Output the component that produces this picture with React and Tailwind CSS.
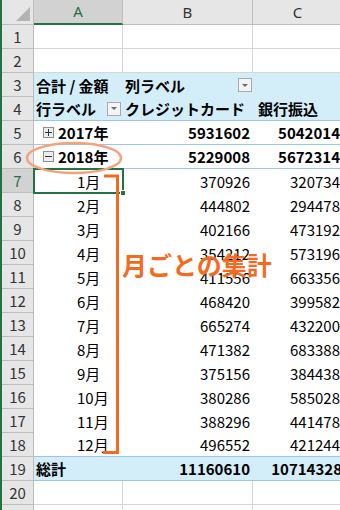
const months = [
  ["1月", 370926, 320734],
  ["2月", 444802, 294478],
  ["3月", 402166, 473192],
  ["4月", 354212, 573196],
  ["5月", 411556, 663356],
  ["6月", 468420, 399582],
  ["7月", 665274, 432200],
  ["8月", 471382, 683388],
  ["9月", 375156, 384438],
  ["10月", 380286, 585028],
  ["11月", 388296, 441478],
  ["12月", 496552, 421244],
];

function RowHead({ n, active }) {
  return (
    <div
      className={`flex w-[32px] shrink-0 items-center justify-center border-r border-b border-[#bdbdbd] text-[15px] ${
        active ? "bg-[#d2d2d2] text-[#217346]" : "bg-[#e6e6e6] text-[#333]"
      }`}
    >
      {n}
    </div>
  );
}

function DropButton() {
  return (
    <span className="flex h-[14px] w-[14px] shrink-0 items-center justify-center border border-[#a9a9a9] bg-[#f4f4f4]">
      <span className="h-0 w-0 border-x-[3px] border-t-[3px] border-x-transparent border-t-[#6b6b6b]" />
    </span>
  );
}

function ToggleBox({ open }) {
  return (
    <span className="relative mr-[4px] flex h-[11px] w-[11px] shrink-0 items-center justify-center border border-[#8e8e8e] bg-[#eeeeee]">
      <span className="h-px w-[7px] bg-[#333]" />
      {!open ? <span className="absolute h-[7px] w-px bg-[#333]" /> : null}
    </span>
  );
}

function GridRow({ n }) {
  return (
    <div className="flex h-[24px]">
      <RowHead n={n} />
      <div className="w-[89px] shrink-0 border-r border-b border-[#d6d6d6]" />
      <div className="w-[130px] shrink-0 border-r border-b border-[#d6d6d6]" />
      <div className="w-[90px] shrink-0 border-r border-b border-[#d6d6d6]" />
    </div>
  );
}

export default function App() {
  return (
    <div className="relative h-[510px] w-[340px] overflow-hidden border-l-2 border-[#217346] bg-white font-['Noto_Sans_CJK_JP',sans-serif] text-[15px] leading-none text-black">
      {/* column headers */}
      <div className="flex h-[25px] bg-[#e6e6e6]">
        <div className="relative w-[32px] shrink-0 border-r border-b border-[#bdbdbd]">
          <span className="absolute right-[3px] bottom-[3px] h-0 w-0 border-l-[14px] border-t-[14px] border-l-transparent border-t-transparent border-r-0 border-b-0 [border-bottom:14px_solid_#b4b4b4]" />
        </div>
        <div className="flex w-[89px] shrink-0 items-center justify-center border-r border-b-2 border-r-[#bdbdbd] border-b-[#217346] bg-[#d2d2d2] text-[#217346] font-['Noto_Sans',sans-serif]">
          A
        </div>
        <div className="flex w-[130px] shrink-0 items-center justify-center border-r border-b border-[#bdbdbd] text-[#333] font-['Noto_Sans',sans-serif]">
          B
        </div>
        <div className="flex w-[90px] shrink-0 items-center justify-center border-r border-b border-[#bdbdbd] text-[#333] font-['Noto_Sans',sans-serif]">
          C
        </div>
      </div>

      <GridRow n={1} />
      <GridRow n={2} />

      {/* pivot header */}
      <div className="flex h-[24px]">
        <RowHead n={3} />
        <div className="flex w-[309px] shrink-0 items-center bg-[#d3edf9] font-bold">
          <div className="w-[89px] shrink-0 pl-[2px]">合計 / 金額</div>
          <div className="flex w-[130px] shrink-0 items-center justify-between pr-[1px] pl-[2px]">
            列ラベル
            <DropButton />
          </div>
        </div>
      </div>
      <div className="flex h-[24px]">
        <RowHead n={4} />
        <div className="flex w-[309px] shrink-0 items-center border-b border-[#9cc6e6] bg-[#d3edf9] font-bold">
          <div className="flex w-[89px] shrink-0 items-center justify-between pr-[2px] pl-[2px]">
            行ラベル
            <DropButton />
          </div>
          <div className="w-[130px] shrink-0 pl-[2px]">クレジットカード</div>
          <div className="w-[90px] shrink-0 pl-[5px]">銀行振込</div>
        </div>
      </div>

      {[
        [5, "2017年", 5931602, 5042014, false],
        [6, "2018年", 5229008, 5672314, true],
      ].map(([n, label, b, c, open]) => (
        <div key={n} className="flex h-[24px]">
          <RowHead n={n} />
          <div className="flex w-[309px] shrink-0 items-center border-b border-[#9cc6e6] font-bold">
            <div className="flex w-[89px] shrink-0 items-center pl-[9px]">
              <ToggleBox open={open} />
              {label}
            </div>
            <div className="w-[130px] shrink-0 pr-[3px] text-right">{b}</div>
            <div className="w-[90px] shrink-0 pr-[3px] text-right">{c}</div>
          </div>
        </div>
      ))}

      {months.map(([m, b, c], i) => (
        <div key={m} className="flex h-[24px]">
          <RowHead n={i + 7} active={i === 0} />
          <div
            className={`flex w-[309px] shrink-0 items-center ${
              i === months.length - 1 ? "border-b border-[#9cc6e6]" : ""
            }`}
          >
            <div className="relative flex h-full w-[89px] shrink-0 items-center pl-[43px]">
              {m}
              {i === 0 ? (
                <span className="absolute -top-[1px] -left-[1px] h-[26px] w-[91px] border-2 border-[#217346]">
                  <span className="absolute -right-[4px] -bottom-[4px] h-[6px] w-[6px] border border-white bg-[#217346]" />
                </span>
              ) : null}
            </div>
            <div className="w-[130px] shrink-0 pr-[3px] text-right">{b}</div>
            <div className="w-[90px] shrink-0 pr-[3px] text-right">{c}</div>
          </div>
        </div>
      ))}

      <div className="flex h-[24px]">
        <RowHead n={19} />
        <div className="flex w-[309px] shrink-0 items-center border-b border-[#9cc6e6] bg-[#d3edf9] font-bold">
          <div className="w-[89px] shrink-0 pl-[2px]">総計</div>
          <div className="w-[130px] shrink-0 pr-[3px] text-right">11160610</div>
          <div className="w-[90px] shrink-0 pr-[1px] text-right">10714328</div>
        </div>
      </div>
      <GridRow n={20} />
      <GridRow n={21} />

      {/* annotations */}
      <svg className="pointer-events-none absolute top-0 -left-[2px]" width="340" height="510">
        <ellipse cx="74" cy="158" rx="47" ry="15" fill="none" stroke="#f4a47c" strokeWidth="2.5" />
        <path d="M104 176 H117.5 V452.5 H103" fill="none" stroke="#f26b21" strokeWidth="3" />
      </svg>
      <div className="pointer-events-none absolute top-[252px] left-[120px] text-[25px] font-bold text-[#f26b21]">
        月ごとの集計
      </div>
    </div>
  );
}
